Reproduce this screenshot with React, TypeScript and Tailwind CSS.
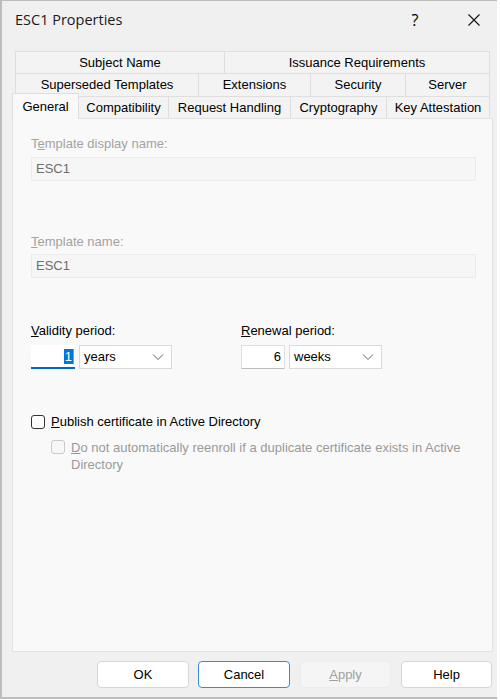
import React from "react";

const F = { fontFamily: '"Liberation Sans", Arial, sans-serif' };

function Tab({ w, label, first }: { w: string; label: string; first?: boolean }) {
  return (
    <div
      className={`${w} h-full flex items-center justify-center border-t border-r border-[#dedede] bg-[#f3f3f3] text-[13px] text-black ${first ? "border-l" : ""}`}
    >
      {label}
    </div>
  );
}

function Chevron() {
  return (
    <svg width="12" height="8" viewBox="0 0 12 8" className="shrink-0">
      <path d="M1 1.5 L6 6.5 L11 1.5" fill="none" stroke="#606060" strokeWidth="1" />
    </svg>
  );
}

export default function App() {
  return (
    <div className="w-[500px] h-[700px] bg-white flex" style={F}>
      <div className="w-[497px] h-[699px] bg-[#f0f0f0] border-l-2 border-t border-b-2 border-[#bdbdbd] flex flex-col">
        {/* Title bar */}
        <div className="h-[38px] flex items-center shrink-0">
          <div
            className="ml-[13px] text-[14.5px] text-[#1a1a1a]"
            style={{ fontFamily: '"Open Sans", "Noto Sans", sans-serif' }}
          >
            ESC1 Properties
          </div>
          <div className="flex-1" />
          <div
            className="w-[20px] text-center text-[16px] text-black mr-[43px]"
            style={{ fontFamily: '"Open Sans", "Noto Sans", sans-serif' }}
          >
            ?
          </div>
          <svg width="12" height="12" viewBox="0 0 12 12" className="mr-[17px]">
            <path d="M0.5 0.5 L11.5 11.5 M11.5 0.5 L0.5 11.5" stroke="#111" strokeWidth="1.1" />
          </svg>
        </div>

        {/* Tabs */}
        <div className="mt-[12px] pl-[10px] flex flex-col shrink-0">
          <div className="ml-[3px] h-[22px] flex">
            <Tab w="w-[210px]" label="Subject Name" first />
            <Tab w="w-[265px]" label="Issuance Requirements" />
          </div>
          <div className="ml-[3px] h-[23px] flex">
            <Tab w="w-[184px]" label="Superseded Templates" first />
            <Tab w="w-[112px]" label="Extensions" />
            <Tab w="w-[95px]" label="Security" />
            <Tab w="w-[84px]" label="Server" />
          </div>
          <div className="-mt-[3px] h-[25px] flex items-end relative z-10">
            <div className="w-[67px] h-[26px] -mb-[1px] bg-[#f9f9f9] border-t border-l border-r border-[#dedede] flex items-start justify-center pt-[3px] text-[13px] text-black">
              General
            </div>
            <div className="h-[22px] flex">
              <Tab w="w-[90px]" label="Compatibility" />
              <Tab w="w-[122px]" label="Request Handling" />
              <Tab w="w-[96px]" label="Cryptography" />
              <Tab w="w-[103px]" label="Key Attestation" />
            </div>
          </div>

          {/* Panel */}
          <div className="w-[481px] h-[534px] bg-[#f9f9f9] border border-[#e2e2e2] pl-[18px] pt-[17px] flex flex-col text-[13px]">
            <div className="h-[16px] leading-[16px] text-[#a3a3a3]">
              T<span className="underline">e</span>mplate display name:
            </div>
            <div className="mt-[5px] w-[445px] h-[24px] bg-[#f6f6f6] border border-[#ebebeb] flex items-center pl-[4px] text-[#6d6d6d]">
              ESC1
            </div>

            <div className="mt-[53px] h-[16px] leading-[16px] text-[#a3a3a3]">
              <span className="underline">T</span>emplate name:
            </div>
            <div className="mt-[4px] w-[445px] h-[24px] bg-[#f6f6f6] border border-[#ebebeb] flex items-center pl-[4px] text-[#6d6d6d]">
              ESC1
            </div>

            <div className="mt-[45px] flex">
              <div className="w-[210px] flex flex-col">
                <div className="h-[16px] leading-[16px] text-black">
                  <span className="underline">V</span>alidity period:
                </div>
                <div className="mt-[6px] flex gap-[4px]">
                  <div className="w-[44px] h-[24px] bg-white border-b-2 border-[#0067c0] flex items-center justify-end pr-[1px]">
                    <span className="bg-[#0078d7] text-white leading-[15px] px-[1px] border-r border-[#e8890c]">1</span>
                  </div>
                  <div className="w-[93px] h-[24px] bg-white border border-[#d9d9d9] flex items-center pl-[4px] pr-[7px] text-black">
                    <span className="flex-1">years</span>
                    <Chevron />
                  </div>
                </div>
              </div>
              <div className="flex flex-col">
                <div className="h-[16px] leading-[16px] text-black">
                  <span className="underline">R</span>enewal period:
                </div>
                <div className="mt-[6px] flex gap-[4px]">
                  <div className="w-[44px] h-[24px] bg-white border border-[#dedede] border-b-[#bdbdbd] flex items-center justify-end pr-[3px] text-black">
                    6
                  </div>
                  <div className="w-[93px] h-[24px] bg-white border border-[#d9d9d9] flex items-center pl-[4px] pr-[7px] text-black">
                    <span className="flex-1">weeks</span>
                    <Chevron />
                  </div>
                </div>
              </div>
            </div>

            <div className="mt-[45px] flex items-center gap-[6px]">
              <div className="w-[14px] h-[14px] rounded-[3px] border border-[#333333] bg-white shrink-0" />
              <div className="text-black leading-[16px]">
                <span className="underline">P</span>ublish certificate in Active Directory
              </div>
            </div>

            <div className="mt-[9px] ml-[20px] flex items-start gap-[6px]">
              <div className="mt-[1px] w-[14px] h-[14px] rounded-[3px] border border-[#c9c9c9] bg-[#f7f7f7] shrink-0" />
              <div className="text-[#9a9a9a] leading-[17px]">
                <span className="underline">D</span>o not automatically reenroll if a duplicate certificate exists in Active
                <br />
                Directory
              </div>
            </div>
          </div>
        </div>

        {/* Buttons */}
        <div className="mt-[9px] flex justify-end pr-[5px] text-[13px]">
          <div className="w-[92px] h-[27px] bg-white border border-[#d6d6d6] rounded-[4px] flex items-center justify-center text-black">
            OK
          </div>
          <div className="ml-[9px] w-[92px] h-[27px] bg-white border border-[#3b8ad6] rounded-[4px] flex items-center justify-center text-black">
            Cancel
          </div>
          <div className="ml-[10px] w-[91px] h-[27px] bg-[#f5f5f5] border border-[#ececec] rounded-[4px] flex items-center justify-center text-[#a0a0a0]">
            <span>
              <span className="underline">A</span>pply
            </span>
          </div>
          <div className="ml-[10px] w-[91px] h-[27px] bg-white border border-[#d6d6d6] rounded-[4px] flex items-center justify-center text-black">
            Help
          </div>
        </div>
      </div>
    </div>
  );
}
